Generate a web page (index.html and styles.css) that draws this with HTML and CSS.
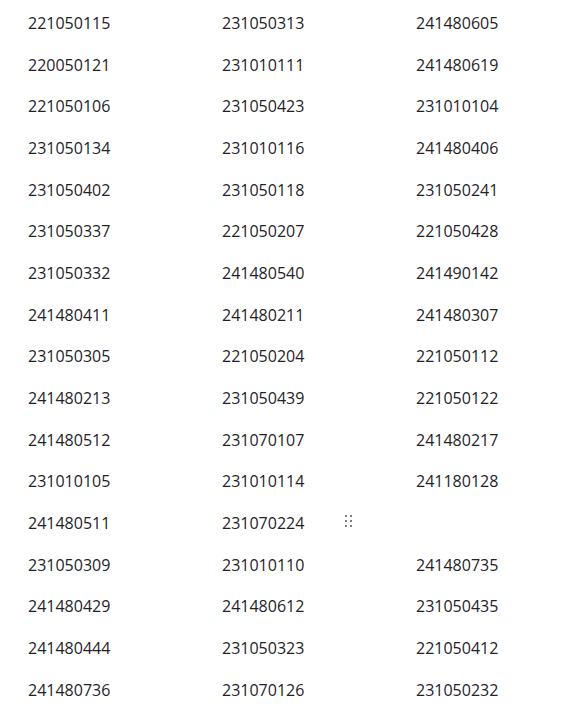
FILE: index.html
```html
<!DOCTYPE html>
<html lang="en">
<head>
  <meta charset="UTF-8">
  <meta name="viewport" content="width=device-width, initial-scale=1.0">
  <title>Student IDs</title>
  <link rel="stylesheet" href="styles.css">
</head>
<body>
  <div class="id-grid">
    <div class="cell">221050115</div><div class="cell">231050313</div><div class="cell">241480605</div>
    <div class="cell">220050121</div><div class="cell">231010111</div><div class="cell">241480619</div>
    <div class="cell">221050106</div><div class="cell">231050423</div><div class="cell">231010104</div>
    <div class="cell">231050134</div><div class="cell">231010116</div><div class="cell">241480406</div>
    <div class="cell">231050402</div><div class="cell">231050118</div><div class="cell">231050241</div>
    <div class="cell">231050337</div><div class="cell">221050207</div><div class="cell">221050428</div>
    <div class="cell">231050332</div><div class="cell">241480540</div><div class="cell">241490142</div>
    <div class="cell">241480411</div><div class="cell">241480211</div><div class="cell">241480307</div>
    <div class="cell">231050305</div><div class="cell">221050204</div><div class="cell">221050112</div>
    <div class="cell">241480213</div><div class="cell">231050439</div><div class="cell">221050122</div>
    <div class="cell">241480512</div><div class="cell">231070107</div><div class="cell">241480217</div>
    <div class="cell">231010105</div><div class="cell">231010114</div><div class="cell">241180128</div>
    <div class="cell">241480511</div>
    <div class="cell">231070224
      <span class="drag-handle">
        <svg width="7" height="12" viewBox="0 0 7 12" shape-rendering="crispEdges">
          <rect x="0" y="0" width="2" height="2" />
          <rect x="5" y="0" width="2" height="2" />
          <rect x="0" y="5" width="2" height="2" />
          <rect x="5" y="5" width="2" height="2" />
          <rect x="0" y="10" width="2" height="2" />
          <rect x="5" y="10" width="2" height="2" />
        </svg>
      </span>
    </div>
    <div class="cell"></div>
    <div class="cell">231050309</div><div class="cell">231010110</div><div class="cell">241480735</div>
    <div class="cell">241480429</div><div class="cell">241480612</div><div class="cell">231050435</div>
    <div class="cell">241480444</div><div class="cell">231050323</div><div class="cell">221050412</div>
    <div class="cell">241480736</div><div class="cell">231070126</div><div class="cell">231050232</div>
  </div>
</body>
</html>
```

FILE: styles.css
```css
:root {
  --text-primary: #1f2329;
  --icon-gray: #7a7f87;
  --surface: #ffffff;
}

* {
  margin: 0;
  padding: 0;
  box-sizing: border-box;
}

body {
  font-family: "Open Sans", "Noto Sans", sans-serif;
  font-size: 16px;
  line-height: 24px;
  color: var(--text-primary);
  background: var(--surface);
  padding: 2px 0 0 28px;
  overflow: hidden;
}

.id-grid {
  display: grid;
  grid-template-columns: 194px 194px 1fr;
  grid-auto-rows: 41.69px;
}

.cell {
  display: flex;
  align-items: center;
  position: relative;
}

.drag-handle {
  position: absolute;
  left: 123px;
  top: 13px;
  display: flex;
  fill: var(--icon-gray);
}
```
